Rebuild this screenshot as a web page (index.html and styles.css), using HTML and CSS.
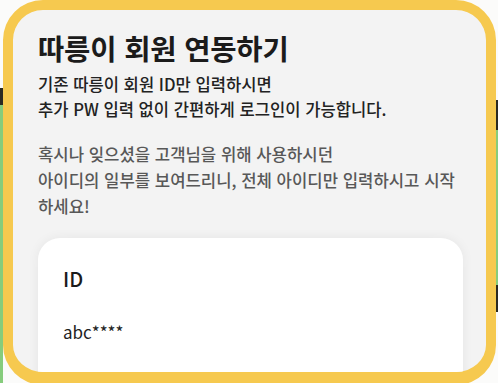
FILE: index.html
```html
<!DOCTYPE html>
<html lang="ko">
<head>
<meta charset="utf-8">
<title>따릉이 회원 연동하기</title>
<link rel="stylesheet" href="styles.css">
</head>
<body>
<div class="edge edge-left"></div>
<div class="edge edge-right"></div>
<main class="frame">
  <h1 class="title">따릉이 회원 연동하기</h1>
  <p class="lead">기존 따릉이 회원 ID만 입력하시면<br>추가 PW 입력 없이 간편하게 로그인이 가능합니다.</p>
  <p class="note">혹시나 잊으셨을 고객님을 위해 사용하시던<br>아이디의 일부를 보여드리니, 전체 아이디만 입력하시고 시작<br>하세요!</p>
  <section class="card">
    <div class="label">ID</div>
    <div class="value">abc****</div>
  </section>
</main>
</body>
</html>
```
FILE: styles.css
```css
html, body {
  margin: 0;
  padding: 0;
}
body {
  width: 498px;
  height: 383px;
  overflow: hidden;
  background: #fbfbfa;
  position: relative;
  font-family: "Noto Sans CJK KR", "Noto Sans", sans-serif;
}
.edge {
  position: absolute;
  top: 0;
  width: 3px;
  height: 383px;
}
.edge-left {
  left: 0;
  background: linear-gradient(to bottom, #fbfbfa 0, #fbfbfa 88px, #2a2a22 88px, #2a2a22 105px, #86cc7c 105px, #86cc7c 383px);
}
.edge-right {
  right: 0;
  width: 2px;
  background: linear-gradient(to bottom, #fbfbfa 0, #fbfbfa 100px, #2a2a22 100px, #2a2a22 130px, #86cc7c 130px, #86cc7c 285px, #2a2a22 285px, #2a2a22 312px, #fbfbfa 312px);
}
.frame {
  box-sizing: border-box;
  margin-left: 3px;
  width: 493px;
  height: 385px;
  border: 10px solid #f6c94f;
  border-bottom-width: 13px;
  border-radius: 40px;
  background: #f3f3f3;
  overflow: hidden;
  padding: 20px 23px 0 25px;
  display: flex;
  flex-direction: column;
}
.title {
  margin: 0;
  font-size: 28.6px;
  line-height: 36px;
  font-weight: 700;
  color: #1b1b1b;
  letter-spacing: -0.2px;
}
.lead {
  margin: 6px 0 0;
  font-size: 16.6px;
  line-height: 25px;
  font-weight: 500;
  color: #222;
  white-space: nowrap;
}
.note {
  margin: 19px 0 0;
  font-size: 16.7px;
  line-height: 26px;
  font-weight: 500;
  color: #585858;
  white-space: nowrap;
}
.card {
  margin-top: 19px;
  flex: 1 0 auto;
  min-height: 200px;
  background: #fff;
  border-radius: 22px;
  box-shadow: 0 0 12px rgba(0, 0, 0, 0.06);
  padding: 28px 25px 0;
  display: flex;
  flex-direction: column;
  gap: 28px;
}
.label {
  font-size: 20px;
  line-height: 26px;
  font-weight: 500;
  color: #1b1b1b;
}
.value {
  font-size: 17px;
  line-height: 24px;
  font-weight: 400;
  color: #222;
}
```
